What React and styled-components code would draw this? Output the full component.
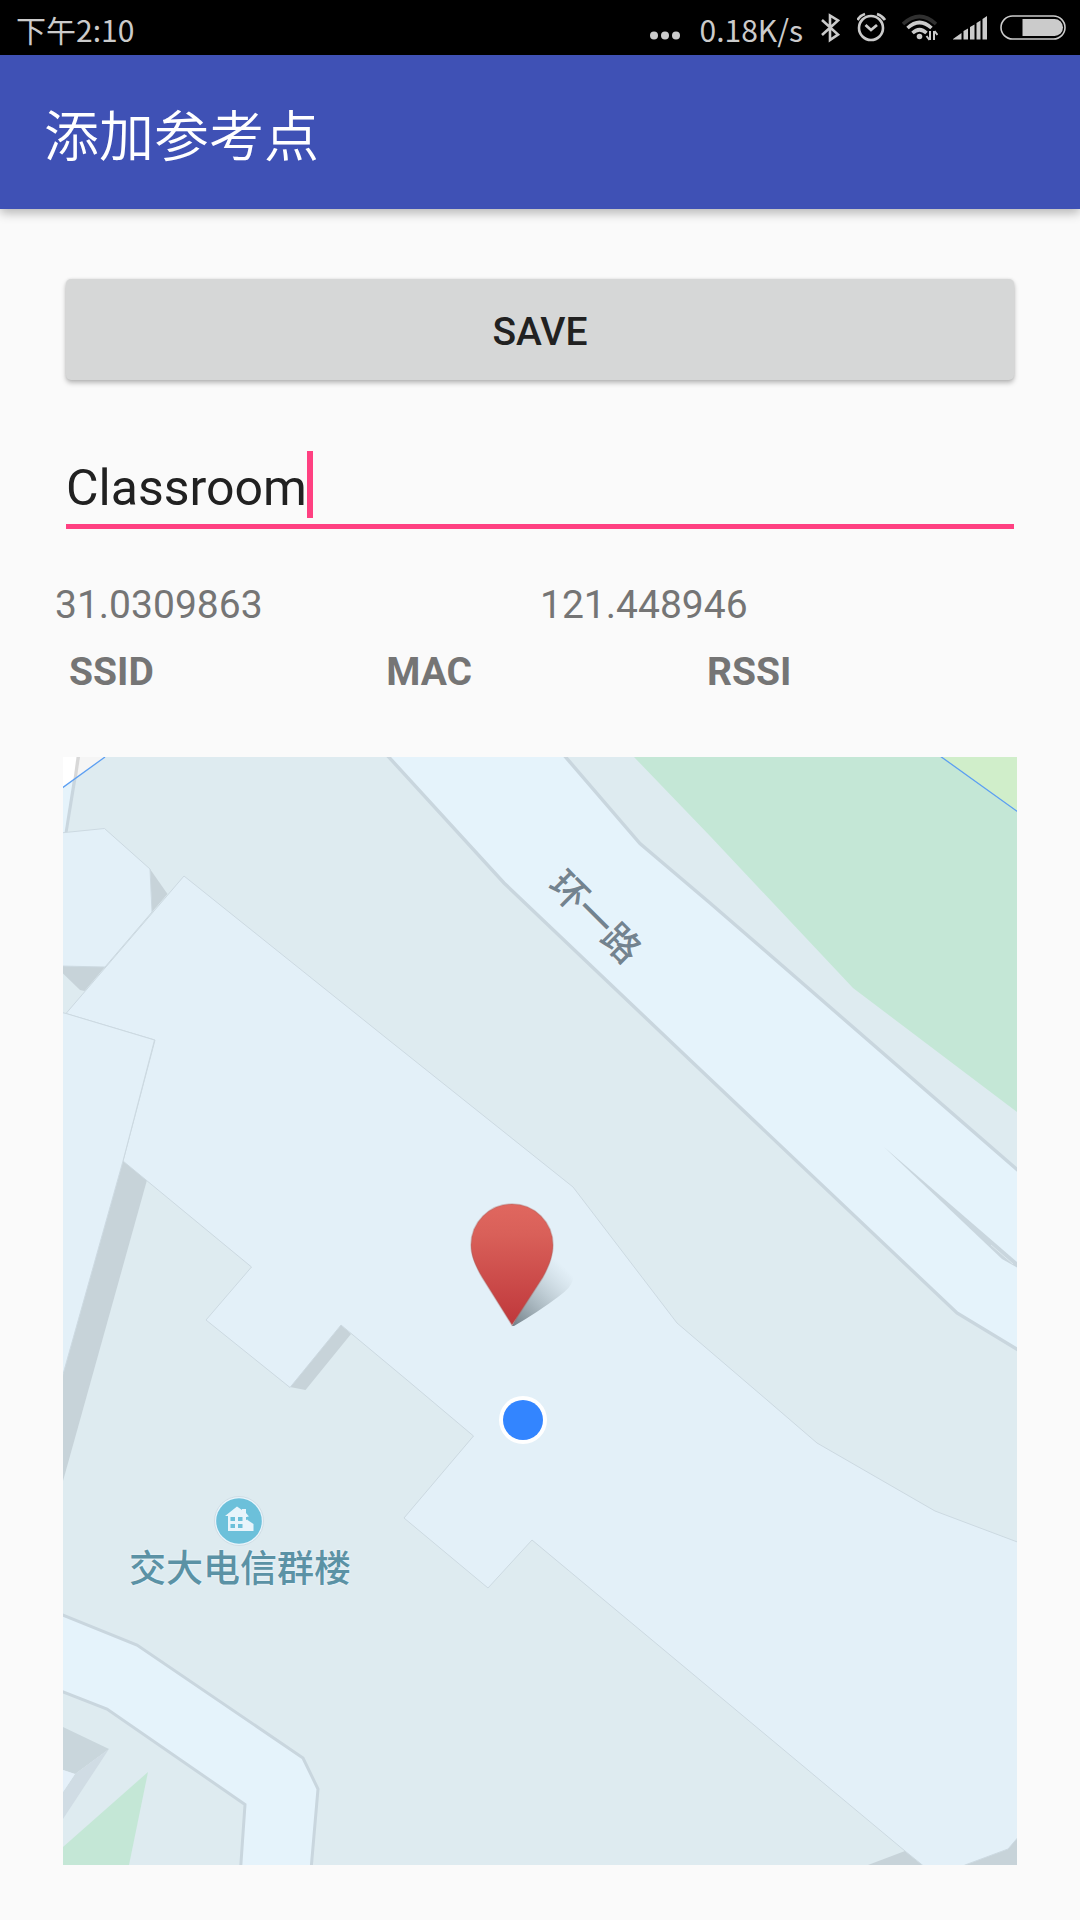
import React, { useState } from "react";
import styled, { createGlobalStyle } from "styled-components";

const GlobalStyle = createGlobalStyle`
  *, *::before, *::after { box-sizing: border-box; }
  body {
    margin: 0;
    background: #fafafa;
    color: #212121;
    font-family: Roboto, "Noto Sans CJK SC", sans-serif;
  }
`;

const Page = styled.div`
  min-height: 100vh;
  display: flex;
  flex-direction: column;
  background: #fafafa;
`;

const StatusBar = styled.header`
  display: flex;
  align-items: center;
  justify-content: space-between;
  height: 55px;
  padding: 0 14px 0 16px;
  background: #000;
  color: #cbcbcb;
`;

const StatusText = styled.span`
  padding-top: 2px;
  font: 400 30px/44px "Noto Sans CJK SC", sans-serif;
`;

const StatusIcons = styled.div`
  display: flex;
  align-items: center;
  gap: 13px;
  svg { display: block; }
`;

const AppBar = styled.div`
  display: flex;
  align-items: center;
  height: 154px;
  padding: 0 44px;
  background: #3f51b5;
  box-shadow: 0 4px 10px rgba(0, 0, 0, 0.28);
`;

const Title = styled.h1`
  margin: 0;
  color: #fff;
  font: 350 55px/80px "Noto Sans CJK SC", sans-serif;
`;

const Main = styled.main`
  display: flex;
  flex-direction: column;
  padding: 70px 55px 55px;
`;

const SaveButton = styled.button`
  height: 101px;
  margin: 0 11px;
  padding: 4px 0 0;
  border: 0;
  border-radius: 5px;
  background: #d6d7d7;
  box-shadow: 0 3px 5px rgba(0, 0, 0, 0.26), 0 0 3px rgba(0, 0, 0, 0.1);
  color: #212121;
  font: 500 39px/52px Roboto, sans-serif;
  cursor: pointer;
`;

const Field = styled.label`
  display: flex;
  align-items: center;
  margin: 71px 11px 0;
  padding-bottom: 6px;
  border-bottom: 5px solid #ff4081;
  cursor: text;
`;

const NameInput = styled.input`
  field-sizing: content;
  height: 67px;
  max-width: 100%;
  padding: 6px 0 0;
  border: 0;
  outline: 0;
  background: transparent;
  color: #212121;
  caret-color: transparent;
  font: 400 50px/61px Roboto, sans-serif;
`;

const Caret = styled.span`
  flex: none;
  width: 6px;
  height: 67px;
  background: #ff4081;
`;

const Coordinates = styled.div`
  display: grid;
  grid-template-columns: 1fr 1fr;
  margin-top: 50px;
  color: #757575;
  font-size: 39px;
  line-height: 52px;
`;

const ScanTable = styled.table`
  table-layout: fixed;
  border-collapse: collapse;
  margin: 15px 8px 59px;
  color: #757575;
  font-size: 39px;
  line-height: 52px;
`;

const HeadCell = styled.th`
  padding: 0 6px;
  text-align: left;
  font-weight: 700;
`;

const MapView = styled.section`
  position: relative;
  margin: 0 8px;
  aspect-ratio: 954 / 1108;
  overflow: hidden;
  background: #deebf0;
`;

const MapCanvas = styled.svg`
  display: block;
  width: 100%;
  height: 100%;
`;

/* Anything pinned to a map location; x and y are percentages of the map. */
const Pin = styled.div`
  position: absolute;
  left: ${(p) => p.$x}%;
  top: ${(p) => p.$y}%;
  transform: translate(-50%, -50%) rotate(${(p) => p.$turn || 0}deg);
  display: flex;
  flex-direction: column;
  align-items: center;
  color: ${(p) => p.$color || "inherit"};
  font: 500 37px/44px "Noto Sans CJK SC", sans-serif;
  white-space: nowrap;
  svg { display: block; }
`;

const MapLabel = styled.span`
  text-shadow: 0 0 2px #eef6fb, 0 0 2px #eef6fb;
`;

const at = (x, y) => ({ $x: ((x - 63) / 954) * 100, $y: ((y - 757) / 1108) * 100 });

function StatusGlyphs() {
  return (
    <>
      <svg width="28" height="55" viewBox="816 0 28 55" fill="none" stroke="#cbcbcb" strokeWidth="2.6" aria-label="Bluetooth">
        <path d="M822 20 L838 34.500 L830 40 V15.500 L838 20.500 L822 35" />
      </svg>
      <svg width="32" height="55" viewBox="857 0 32 55" fill="none" stroke="#cbcbcb" aria-label="Alarm">
        <circle cx="871" cy="28" r="12" strokeWidth="2.6" />
        <path d="M865.500 25 L871 30 L877 25" strokeWidth="2.8" />
        <path d="M857.500 20 Q860 15.500 865 14 M877 14 Q882 15.500 885 20" strokeWidth="2.8" />
      </svg>
      <svg width="36" height="55" viewBox="902 0 36 55" fill="none" stroke="#cbcbcb" aria-label="Wi-Fi">
        <path d="M903 24 Q919.500 9 936 24" stroke="#303030" strokeWidth="3.6" />
        <path d="M907.500 28 Q919.500 17 931.500 28" strokeWidth="3.6" />
        <path d="M912.500 33 Q919.500 26.500 926.500 33" strokeWidth="3.6" />
        <circle cx="919.500" cy="36.500" r="2.800" fill="#cbcbcb" stroke="none" />
        <path d="M930 31 V40 M929.500 40 L926.500 36 M934 40 V31 M934.500 31 L937.500 35" strokeWidth="2" />
      </svg>
      <svg width="36" height="55" viewBox="951 0 36 55" fill="#cbcbcb" aria-label="Signal">
        <path d="M953 39 L961.500 33 V39.500 H953Z M963.500 31 L968 28.500 V39.500 H963.500Z M970 27 L974.500 24.500 V39.500 H970Z M976.500 23 L980.500 20.500 V39.500 H976.500Z M982.500 19 L987 16 V39.500 H982.500Z" />
      </svg>
      <svg width="66" height="55" viewBox="1000 0 66 55" aria-label="Battery">
        <rect x="1001" y="16" width="64" height="23" rx="11.500" fill="none" stroke="#cbcbcb" strokeWidth="1.6" />
        <path d="M1022.500 19 H1054.500 A8.500 8.500 0 0 1 1054.500 36 H1022.500Z" fill="#cbcbcb" />
      </svg>
    </>
  );
}

function MapDrawing() {
  return (
    <MapCanvas viewBox="63 757 954 1108" preserveAspectRatio="xMidYMid slice" aria-hidden="true">
      {/* footpath in the north-west corner */}
      <path d="M63 757 H78 L66 833 H63Z" fill="#e5f3fb" />
      <path d="M76.500 757 H80 L67.500 833 H64.500Z" fill="#c9d6de" />
      <path d="M63 757 H105 L63 787.500Z" fill="#f5f5f5" />
      <path d="M63 757 H77 L73.500 780 L63 787.500Z" fill="#fff" />
      <path d="M76.500 757 H80 L77 777 L73.500 779.500Z" fill="#d8d8d8" />

      {/* ring road */}
      <path
        d="M388 757 L504 883 L690 1059 L957 1313 L1017 1349 V1169 L710 903 L640 844 L565 757Z"
        fill="#e5f3fb"
      />
      <g fill="none" stroke="#c9d6de" strokeWidth="3.4">
        <path d="M386 754 L504 883 L690 1060 L957 1313 L1020 1351" />
        <path d="M563 754 L640 843.500 L710 903 L1020 1172" />
      </g>
      <path d="M884 1147 L1017 1262 V1267.500 L1002 1259Z" fill="#c9d6de" />
      <path d="M991 1245 L1013 1264" stroke="#dbe7ed" strokeWidth="1" />

      {/* parkland */}
      <path d="M634 757 L710 836 L853 988 L1017 1112 V757Z" fill="#c4e7d6" />
      <path d="M941 757 L1017 811 V757Z" fill="#d0eeca" />

      {/* building shadows */}
      <g fill="#c7d3d9">
        <path d="M150 869 L167.500 894 L152 912Z" />
        <path d="M63 966 L105 967 L84.500 991 L80 990 L63 973.500Z" />
        <path d="M123 1161 L147 1180 L63 1481 V1374Z" />
        <path d="M341 1325 L351 1334 L305.500 1390 L290 1387Z" />
        <path d="M868 1865 L905 1851 L922 1865Z" />
        <path d="M965 1865 L1008 1849 L1017 1838 V1865Z" />
      </g>

      {/* buildings */}
      <g fill="#e3f0f8" stroke="#ccd9e1" strokeWidth="1">
        <path d="M60 833 L104.500 828.500 L150 869 L152 912 L105 967 L60 966Z" />
        <path d="M66 1013.500 L184 876 L390 1041 L573 1187 L677 1323 L767 1400 L817 1443 L935 1511 L1020 1543 V1835 L1008 1849 L965 1865 L960 1868 H926 L905 1851 L700 1680 L532 1540 L488 1588 L404 1518 L473.500 1436 L407 1380 L341 1325 L290 1387.500 L206 1320 L251.500 1267 L123 1161 L155 1040Z" />
        <path d="M60 1012 L66 1013.500 L154.500 1040 L123 1161 L60 1385Z" />
      </g>

      {/* south-west road */}
      <path
        d="M58 1613 L137 1645 L303 1758 L318 1789 L311 1870 H240.500 L245 1804.500 L107 1709 L58 1690Z"
        fill="#e5f3fb"
        stroke="#c9d6de"
        strokeWidth="3"
      />
      <path d="M63 1727 L109 1749 L75 1774 L63 1770Z" fill="#c9d6dc" />
      <path d="M109 1749 L63 1819 V1792 L75 1774Z" fill="#d0dce4" />
      <path d="M63 1770 L75 1774 L63 1792Z" fill="#e5f0f9" />
      <path d="M63 1847 L148 1772 L129 1865 H63Z" fill="#c4e7d6" />

      {/* location accuracy circle */}
      <path d="M60 789.500 L105 757 M940 756 L1018 812" stroke="#5c9ff2" strokeWidth="1.3" fill="none" />
    </MapCanvas>
  );
}

function MarkerIcon() {
  return (
    <svg width="110" height="126" viewBox="468 1202 110 126" aria-label="Marker">
      <defs>
        <linearGradient id="pinFill" x1="0" y1="0" x2="0" y2="1">
          <stop offset="0" stopColor="#e0675f" />
          <stop offset="0.250" stopColor="#d96059" />
          <stop offset="1" stopColor="#bf373b" />
        </linearGradient>
        <linearGradient id="pinShade" gradientUnits="userSpaceOnUse" x1="514" y1="1325" x2="568" y2="1270">
          <stop offset="0" stopColor="#6f7d85" stopOpacity="0.95" />
          <stop offset="0.500" stopColor="#8b9aa2" stopOpacity="0.500" />
          <stop offset="1" stopColor="#a9b7bf" stopOpacity="0" />
        </linearGradient>
      </defs>
      <path d="M512 1326 L548 1258 Q572 1262 573 1279 Q572 1287 558 1297 Q538 1312 514 1326Z" fill="url(#pinShade)" />
      <path
        d="M512 1325 L482 1277 C475 1265 471 1256 471 1245 A41 41 0 0 1 553 1245 C553 1256 549 1266 543 1277Z"
        fill="url(#pinFill)"
        stroke="#a8645f"
        strokeOpacity="0.350"
        strokeWidth="1.500"
      />
    </svg>
  );
}

function PlaceIcon() {
  return (
    <svg width="50" height="50" viewBox="214 1497 50 50" aria-hidden="true">
      <circle cx="239" cy="1522" r="24.500" fill="#e8f4fb" stroke="#cbd8df" strokeWidth="0.800" />
      <circle cx="239" cy="1522" r="22.800" fill="#6cc0da" />
      <path d="M225 1517 L237 1507.500 L242 1511 V1510 H246 V1514 L249 1517.500 H247.500 V1521 L253.500 1525 V1532 H228 V1517Z" fill="#e8f4fb" />
      <path d="M230.500 1518 h4.500 v4 h-4.500z M238 1518 h4.500 v4 h-4.500z M230.500 1525 h4.500 v4 h-4.500z M238 1525 h4.500 v4 h-4.500z M246 1518 h3 v2 l-3 1z" fill="#6cc0da" />
    </svg>
  );
}

export default function App() {
  const [name, setName] = useState("Classroom");

  return (
    <Page>
      <GlobalStyle />
      <StatusBar>
        <StatusText>下午2:10</StatusText>
        <StatusIcons>
          <svg width="38" height="55" viewBox="648 0 38 55" fill="#cbcbcb" aria-label="More">
            <circle cx="653" cy="35.500" r="4" />
            <circle cx="664" cy="35.500" r="4" />
            <circle cx="675" cy="35.500" r="4" />
          </svg>
          <StatusText>0.18K/s</StatusText>
          <StatusGlyphs />
        </StatusIcons>
      </StatusBar>

      <AppBar>
        <Title>添加参考点</Title>
      </AppBar>

      <Main>
        <SaveButton type="button">SAVE</SaveButton>

        <Field>
          <NameInput
            type="text"
            aria-label="Name"
            value={name}
            onChange={(event) => setName(event.target.value)}
          />
          <Caret />
        </Field>

        <Coordinates>
          <span>31.0309863</span>
          <span>121.448946</span>
        </Coordinates>

        <ScanTable>
          <thead>
            <tr>
              <HeadCell scope="col">SSID</HeadCell>
              <HeadCell scope="col">MAC</HeadCell>
              <HeadCell scope="col">RSSI</HeadCell>
            </tr>
          </thead>
        </ScanTable>

        <MapView aria-label="Map">
          <MapDrawing />
          <Pin {...at(597, 915)} $turn={45} $color="#73838f">
            <MapLabel>环一路</MapLabel>
          </Pin>
          <Pin {...at(523, 1265)}>
            <MarkerIcon />
          </Pin>
          <Pin {...at(523, 1420)}>
            <svg width="50" height="50" viewBox="0 0 50 50" aria-label="Current position">
              <circle cx="25" cy="25" r="24" fill="#fff" />
              <circle cx="25" cy="25" r="20" fill="#3385ff" />
            </svg>
          </Pin>
          <Pin {...at(239, 1521)}>
            <PlaceIcon />
          </Pin>
          <Pin {...at(240, 1566)} $color="#5b92a5">
            <MapLabel>交大电信群楼</MapLabel>
          </Pin>
        </MapView>
      </Main>
    </Page>
  );
}
